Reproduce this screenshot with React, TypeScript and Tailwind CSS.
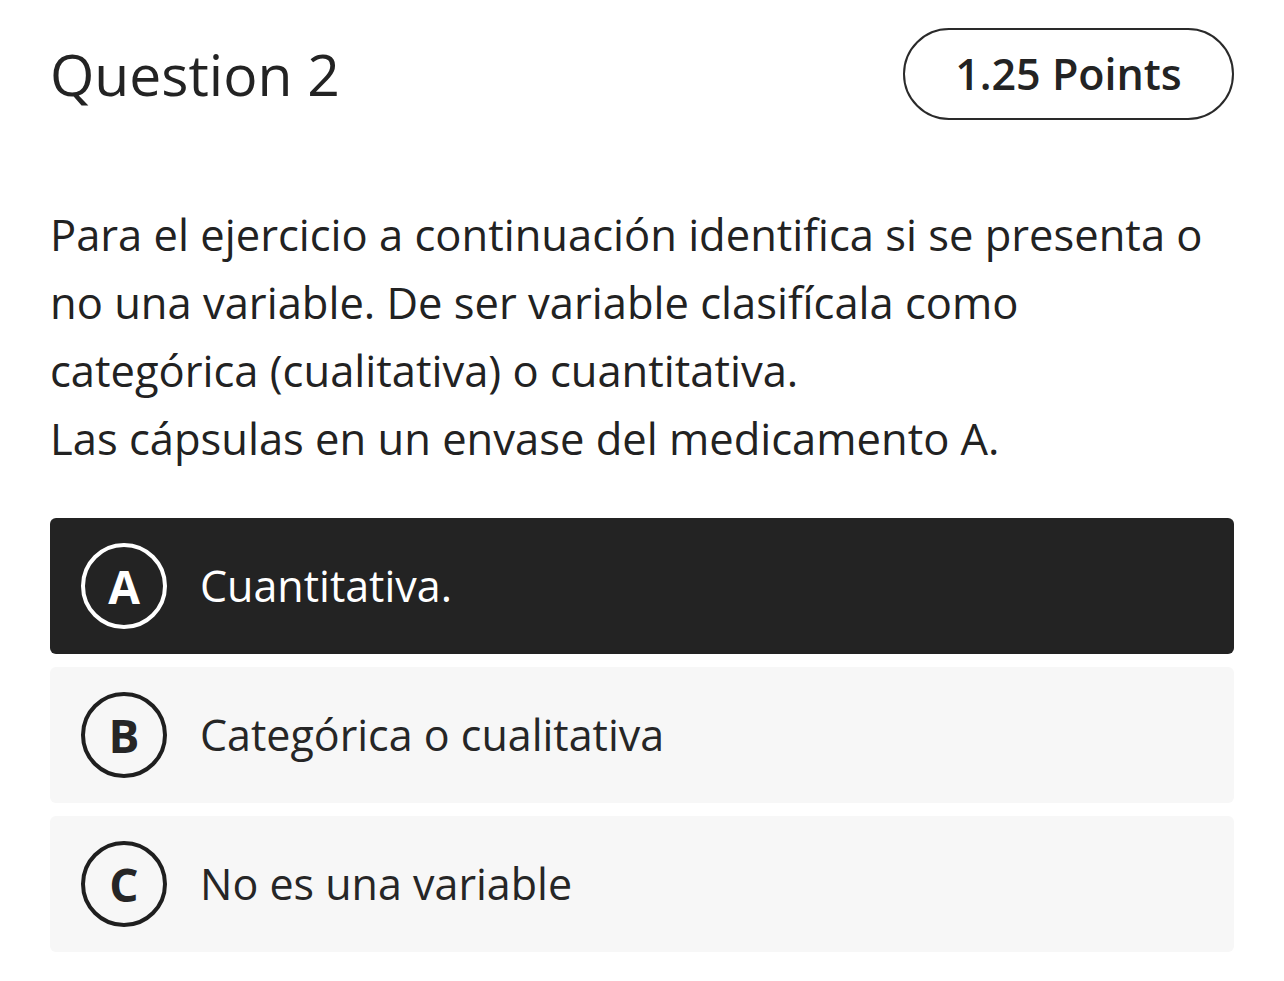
import React from "react";

const options = [
  { letter: "A", text: "Cuantitativa.", selected: true },
  { letter: "B", text: "Categórica o cualitativa", selected: false },
  { letter: "C", text: "No es una variable", selected: false },
];

export default function App() {
  return (
    <div
      className="w-[1284px] h-[981px] bg-white px-[50px] pt-[28px] text-[#232323]"
      style={{ fontFamily: '"Open Sans", "Noto Sans", sans-serif' }}
    >
      <div className="flex items-center justify-between">
        <h1 className="text-[57px] font-medium leading-none">Question 2</h1>
        <div className="w-[331px] h-[92px] rounded-full border-2 border-[#2a2a2a] flex items-center justify-center text-[43px] font-semibold">
          1.25 Points
        </div>
      </div>
      <div className="mt-[81px] w-[1160px] text-[43.5px] leading-[68px] text-[#222222]">
        <p>
          Para el ejercicio a continuación identifica si se presenta o no una variable. De ser variable clasifícala como categórica (cualitativa) o cuantitativa.
        </p>
        <p>Las cápsulas en un envase del medicamento A.</p>
      </div>
      <div className="mt-[45px] flex flex-col gap-[13px]">
        {options.map((o) => (
          <div
            key={o.letter}
            className={
              o.selected
                ? "h-[136px] rounded-[6px] bg-[#232323] text-white flex items-center pl-[31px]"
                : "h-[136px] rounded-[6px] bg-[#f7f7f7] text-[#262626] flex items-center pl-[31px]"
            }
          >
            <div
              className={
                o.selected
                  ? "w-[86px] h-[86px] rounded-full border-[4px] border-white flex items-center justify-center text-[46px] font-bold"
                  : "w-[86px] h-[86px] rounded-full border-[4px] border-[#1f1f1f] flex items-center justify-center text-[46px] font-bold"
              }
            >
              {o.letter}
            </div>
            <span className="ml-[33px] text-[43px]">{o.text}</span>
          </div>
        ))}
      </div>
    </div>
  );
}
